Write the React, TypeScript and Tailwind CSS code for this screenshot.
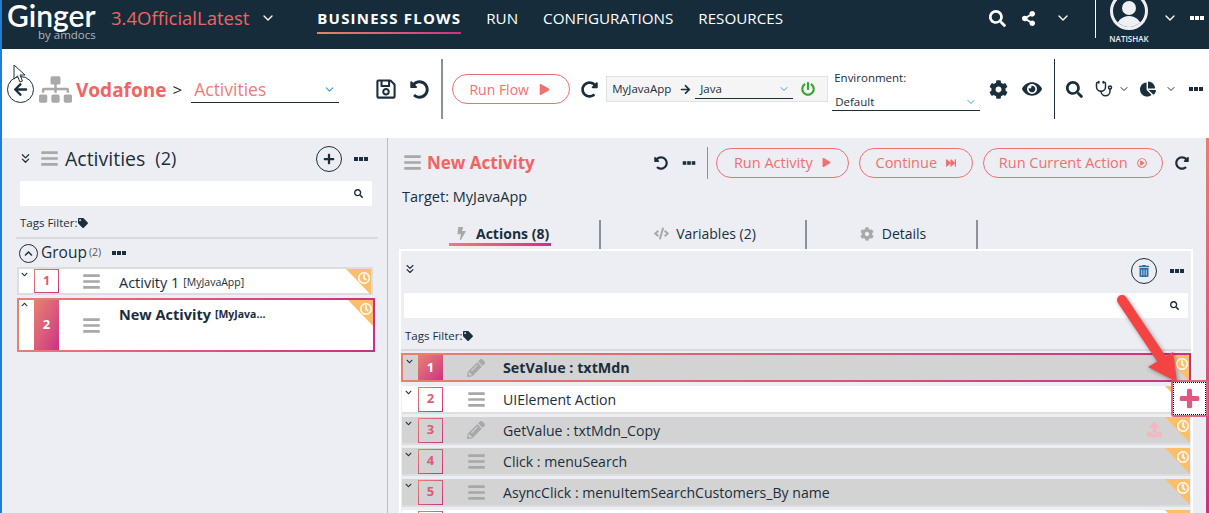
import {
  FaArrowLeft,
  FaArrowRight,
  FaBars,
  FaBolt,
  FaChartPie,
  FaChevronDown,
  FaChevronUp,
  FaCode,
  FaCog,
  FaEye,
  FaFastForward,
  FaPencilAlt,
  FaPlay,
  FaPlus,
  FaPowerOff,
  FaRedoAlt,
  FaRegClock,
  FaRegPlayCircle,
  FaRegSave,
  FaSearch,
  FaShareAlt,
  FaSitemap,
  FaTag,
  FaTrashAlt,
  FaUndoAlt,
  FaUpload,
} from "react-icons/fa";
import { LuChevronDown, LuChevronsDown, LuStethoscope } from "react-icons/lu";

const actions = [
  { n: 1, name: "SetValue : txtMdn", icon: "pen", selected: true },
  { n: 2, name: "UIElement Action", icon: "bars", white: true },
  { n: 3, name: "GetValue : txtMdn_Copy", icon: "pen", upload: true },
  { n: 4, name: "Click : menuSearch", icon: "bars" },
  { n: 5, name: "AsyncClick : menuItemSearchCustomers_By name", icon: "bars" },
];

function Dots({ className = "" }: { className?: string }) {
  return (
    <div className={`flex gap-[1px] ${className}`}>
      <span className="h-[4px] w-[4px] bg-current" />
      <span className="h-[4px] w-[4px] bg-current" />
      <span className="h-[4px] w-[4px] bg-current" />
    </div>
  );
}

function Corner() {
  return (
    <div className="absolute right-0 top-0 h-[26px] w-[25px] bg-[#fdbe69] [clip-path:polygon(0_0,100%_0,100%_100%)]">
      <FaRegClock className="absolute right-[1px] top-[3px] text-[12px] text-white" stroke="currentColor" strokeWidth={20} />
    </div>
  );
}

function NumBox({ n, on }: { n: number; on?: boolean }) {
  if (on) {
    return (
      <div className="flex w-[25px] self-stretch items-center justify-center bg-gradient-to-br from-[#e8806f] to-[#cc2f82] text-[13px] font-bold text-white">
        {n}
      </div>
    );
  }
  return (
    <div className="flex h-[25px] w-[25px] items-center justify-center border [border-image:linear-gradient(135deg,#e8806f,#cc2f82)_1] text-[13px] font-bold text-[#dd5a78]">
      {n}
    </div>
  );
}

function OutlineBtn({ label, icon, width }: { label: string; icon: React.ReactNode; width: string }) {
  return (
    <div className={`flex h-[30px] ${width} items-center justify-center gap-[9px] rounded-full border border-[#f26f6f] text-[14.5px] text-[#f26f6f]`}>
      {label}
      {icon}
    </div>
  );
}

function ActionRow({ a }: { a: (typeof actions)[number] }) {
  const bg = a.white ? "bg-white" : "bg-[#d3d3d3]";
  const outer = a.selected
    ? "h-[29px] mb-[4px] border-2 border-transparent [background:linear-gradient(#d3d3d3,#d3d3d3)_padding-box,linear-gradient(to_right,#e8806f,#cc2f82)_border-box]"
    : `h-[26px] mb-[5px] mx-[1px] shadow-[0_2px_0_#dcdde0] ${bg}`;
  return (
    <div className={`relative flex items-center ${outer}`}>
      <div className={`${a.selected ? "w-[15px]" : "w-[16px]"} self-start pl-[3px] pt-[3px]`}>
        <FaChevronDown className="text-[7px] text-[#1b2e3c]" />
      </div>
      <NumBox n={a.n} on={a.selected} />
      <div className="flex w-[60px] justify-center pl-[6px]">
        {a.icon === "pen" ? (
          <FaPencilAlt className="text-[18px] text-[#a8a8a8]" />
        ) : (
          <FaBars className="text-[19px] text-[#a8a8a8]" />
        )}
      </div>
      <span className={`pt-[1px] ${a.selected ? "text-[14.3px] font-bold" : "text-[14.1px]"}`}>{a.name}</span>
      {a.upload && <FaUpload className="absolute right-[28px] top-[5px] text-[15px] text-[#f9b4bd]" />}
      <Corner />
    </div>
  );
}

export default function App() {
  return (
    <div className="relative flex h-[513px] w-[1209px] flex-col overflow-hidden border-l-2 border-[#1e7fd4] bg-[#eceef3] font-['Open_Sans','Noto_Sans',sans-serif] text-[#1b2e3c]">
      {/* Top nav */}
      <header className="flex h-[49px] shrink-0 items-center bg-[#162c3b] pb-[13px] text-white">
        <div className="ml-[5px] flex w-[94px] flex-col self-start">
          <span className="font-['Lato',sans-serif] text-[30px] font-semibold leading-[28px] pt-[1px]">Ginger</span>
          <span className="ml-[31px] text-[11.5px] leading-[11px] text-[#aeb6bc]">by amdocs</span>
        </div>
        <span className="ml-[10px] text-[18.5px] text-[#f26464]">3.4OfficialLatest</span>
        <LuChevronDown className="ml-[11px] text-[16px]" />
        <nav className="ml-[41px] flex items-center gap-[25px] text-[15.2px]">
          <span className="relative text-[15px] font-bold tracking-[1.2px]">
            BUSINESS FLOWS
            <span className="absolute -bottom-[5px] left-0 h-[2px] w-full bg-gradient-to-r from-[#e8806f] to-[#cc2f82]" />
          </span>
          <span>RUN</span>
          <span>CONFIGURATIONS</span>
          <span>RESOURCES</span>
        </nav>
        <div className="ml-auto flex h-[36px] items-center self-start">
          <FaSearch className="text-[17px]" />
          <FaShareAlt className="ml-[15px] text-[15px]" />
          <LuChevronDown className="ml-[19px] text-[16px]" />
          <div className="ml-[24px] h-[38px] w-px self-start bg-white" />
          <div className="ml-[14px] flex w-[38px] flex-col items-center self-start">
            <div className="mt-[-8px] h-[38px] w-[38px] shrink-0 overflow-hidden rounded-full border-[3px] border-[#eef0f4]">
              <div className="mx-auto mt-[6px] h-[14px] w-[14px] rounded-full bg-[#eef0f4]" />
              <div className="mx-auto mt-[1px] h-[14px] w-[26px] rounded-t-full bg-[#eef0f4]" />
            </div>
            <span className="mt-[4px] text-[8px] font-semibold leading-[10px] text-[#eef0f4]">NATISHAK</span>
          </div>
          <LuChevronDown className="ml-[14px] text-[16px]" />
          <Dots className="ml-[12px] mr-[5px]" />
        </div>
      </header>

      {/* Toolbar */}
      <div className="flex h-[89px] shrink-0 items-center bg-white pb-[9px]">
        <div className="ml-[5px] flex h-[27px] w-[27px] items-center justify-center rounded-full border border-[#1b2e3c]">
          <FaArrowLeft className="text-[15px]" />
        </div>
        <FaSitemap className="ml-[5px] text-[33px] text-[#a9a9a9]" />
        <span className="ml-[4px] mt-[2px] text-[19px] font-bold text-[#f26464]">Vodafone</span>
        <span className="ml-[6px] mt-[2px] text-[17px]">&gt;</span>
        <div className="ml-[9px] mt-[2px] flex h-[26px] w-[148px] items-center justify-between border-b border-[#1b2e3c] px-[3px]">
          <span className="text-[17.5px] text-[#f27a7a]">Activities</span>
          <LuChevronDown className="text-[13px] text-[#3f9bea]" />
        </div>
        <FaRegSave className="ml-[36px] text-[22px]" />
        <FaUndoAlt className="ml-[13px] text-[19px]" />
        <div className="ml-[12px] h-[60px] w-[2px] bg-[#8a9299]" />
        <div className="ml-[9px] flex h-[30px] w-[118px] items-center justify-center gap-[10px] rounded-full border border-[#f26f6f] pr-[3px] text-[14px] text-[#f26f6f]">
          Run Flow <FaPlay className="text-[11px]" />
        </div>
        <FaRedoAlt className="ml-[11px] text-[17px]" />
        <div className="ml-[8px] flex h-[26px] w-[222px] items-center border border-[#e2e2e2] bg-[#f5f5f5] pl-[5px] text-[11.5px]">
          MyJavaApp
          <FaArrowRight className="ml-[9px] text-[11px]" />
          <div className="ml-[4px] flex h-[20px] w-[98px] items-center justify-between border-b border-[#1b2e3c] pl-[5px] pr-[3px]">
            Java
            <LuChevronDown className="text-[12px] text-[#3f9bea]" />
          </div>
          <FaPowerOff className="ml-[8px] text-[14px] text-[#3aa52f]" />
        </div>
        <div className="ml-[4px] mt-[3px] flex w-[148px] flex-col text-[11.5px] leading-[15px]">
          <span className="pl-[2px]">Environment:</span>
          <div className="mt-[8px] flex h-[18px] items-center justify-between border-b border-[#1b2e3c] px-[3px]">
            Default
            <LuChevronDown className="text-[12px] text-[#3f9bea]" />
          </div>
        </div>
        <FaCog className="ml-[9px] text-[19px]" />
        <FaEye className="ml-[14px] text-[20px]" />
        <div className="ml-[12px] h-[60px] w-px bg-[#1b2e3c]" />
        <FaSearch className="ml-[11px] text-[17px]" />
        <LuStethoscope className="ml-[12px] text-[18px]" />
        <LuChevronDown className="ml-[5px] text-[12px]" />
        <FaChartPie className="ml-[10px] text-[16px]" />
        <LuChevronDown className="ml-[9px] text-[12px]" />
        <Dots className="ml-[12px]" />
      </div>

      {/* Body */}
      <div className="flex min-h-0 flex-1">
        {/* Activities list */}
        <aside className="flex w-[386px] shrink-0 flex-col border-r border-[#b9bdc3] pl-[14px] pr-[9px]">
          <div className="flex h-[41px] shrink-0 items-center pl-[2px]">
            <LuChevronsDown className="text-[15px]" />
            <FaBars className="ml-[7px] text-[19px] text-[#a8a8a8]" />
            <span className="ml-[6px] text-[19.5px]">Activities</span>
            <span className="ml-[10px] text-[18px]">(2)</span>
            <div className="ml-auto flex h-[26px] w-[26px] items-center justify-center rounded-full border border-[#1b2e3c]">
              <FaPlus className="text-[12px]" />
            </div>
            <Dots className="ml-[12px] mr-[10px]" />
          </div>
          <div className="ml-[4px] mr-[6px] mt-[2px] flex h-[25px] shrink-0 items-center justify-end bg-white pr-[9px]">
            <FaSearch className="text-[9px]" />
          </div>
          <div className="ml-[4px] mt-[9px] flex items-center text-[11.5px] leading-[16px]">
            Tags Filter:
            <FaTag className="ml-[1px] text-[10px]" />
          </div>
          <div className="mt-[6px] h-[2px] shrink-0 bg-[#d8dadd]" />
          <div className="mt-[4px] flex h-[20px] items-center pl-[3px]">
            <div className="flex h-[19px] w-[19px] items-center justify-center rounded-full border border-[#1b2e3c]">
              <FaChevronUp className="text-[9px]" />
            </div>
            <span className="ml-[3px] text-[15.5px]">Group</span>
            <span className="ml-[2px] text-[10.5px] text-[#555]">(2)</span>
            <Dots className="ml-[11px]" />
          </div>
          {/* activity rows */}
          <div className="relative ml-[1px] mr-[5px] mt-[4px] flex h-[28px] shrink-0 items-stretch border-2 border-[#dcdde0] bg-white">
            <div className="w-[15px] pl-[2px] pt-[2px]">
              <FaChevronDown className="text-[7px]" />
            </div>
            <div className="flex h-[24px] w-[25px] items-center justify-center border [border-image:linear-gradient(135deg,#e8806f,#cc2f82)_1] text-[12.5px] font-bold text-[#dd5a78]">
              1
            </div>
            <div className="flex w-[60px] items-center justify-center pl-[4px]">
              <FaBars className="text-[19px] text-[#a8a8a8]" />
            </div>
            <div className="flex items-center pt-[3px]">
              <span className="text-[14.5px]">Activity 1</span>
              <span className="ml-[4px] mt-[1px] text-[10.5px]">[MyJavaApp]</span>
            </div>
            <Corner />
          </div>
          <div className="relative ml-[1px] mr-[3px] mt-[3px] flex h-[54px] shrink-0 items-stretch border-2 border-transparent [background:linear-gradient(#fff,#fff)_padding-box,linear-gradient(to_right,#e8806f,#cc2f82)_border-box]">
            <div className="w-[15px] pl-[2px] pt-[1px]">
              <FaChevronUp className="text-[7px]" />
            </div>
            <div className="flex w-[25px] items-center justify-center bg-gradient-to-br from-[#e8806f] to-[#cc2f82] text-[13px] font-bold text-white">
              2
            </div>
            <div className="flex w-[60px] items-center justify-center pl-[4px]">
              <FaBars className="text-[19px] text-[#a8a8a8]" />
            </div>
            <div className="flex items-start pt-[4px]">
              <span className="text-[14.5px] font-bold">New Activity</span>
              <span className="ml-[4px] mt-[3px] text-[10.5px] font-bold">[MyJava...</span>
            </div>
            <Corner />
          </div>
        </aside>

        {/* Activity details */}
        <main className="flex min-w-0 flex-1 flex-col overflow-hidden pl-[11px]">
          <div className="flex h-[49px] shrink-0 items-center pl-[4px]">
            <FaBars className="text-[19px] text-[#a8a8a8]" />
            <span className="ml-[5px] text-[17px] font-bold text-[#f26464]">New Activity</span>
            <FaUndoAlt className="ml-[119px] text-[14px]" />
            <Dots className="ml-[14px] scale-90" />
            <div className="ml-[11px] h-[32px] w-px bg-[#8a9299]" />
            <div className="ml-[8px] flex shrink-0 gap-[10px]">
              <OutlineBtn label="Run Activity" width="w-[133px]" icon={<FaPlay className="text-[9px]" />} />
              <OutlineBtn label="Continue" width="w-[114px]" icon={<FaFastForward className="text-[10px]" />} />
              <OutlineBtn label="Run Current Action" width="w-[180px]" icon={<FaRegPlayCircle className="text-[10px]" />} />
            </div>
            <FaRedoAlt className="ml-[12px] text-[14px]" />
          </div>
          <div className="shrink-0 pl-[3px] text-[14.5px] leading-[20px]">Target: MyJavaApp</div>
          <div className="mt-[13px] flex h-[29px] shrink-0 pl-[24px] text-[14px]">
            <div className="flex w-[178px] items-start border-r-2 border-[#8a9299] pt-[3px]">
              <span className="relative ml-[26px] flex items-center gap-[8px] pl-[6px] font-bold">
                <FaBolt className="text-[13px] text-[#a8a8a8]" />
                Actions (8)
                <span className="absolute -bottom-[2px] left-0 h-[3px] w-[102px] bg-gradient-to-r from-[#e8806f] to-[#cc2f82]" />
              </span>
            </div>
            <div className="flex w-[206px] items-start justify-center border-r-2 border-[#8a9299] pl-[4px] pt-[3px]">
              <span className="flex items-center gap-[7px]">
                <FaCode className="text-[15px] text-[#a8a8a8]" /> Variables (2)
              </span>
            </div>
            <div className="flex w-[171px] items-start justify-center border-r-2 border-[#8a9299] pl-[3px] pt-[3px]">
              <span className="flex items-center gap-[8px]">
                <FaCog className="text-[14px] text-[#a8a8a8]" /> Details
              </span>
            </div>
          </div>

          {/* Actions panel */}
          <section className="mr-[13px] min-h-0 flex-1 overflow-hidden border-l-2 border-r-2 border-t-2 border-white">
            <div className="flex h-[40px] items-center pl-[2px]">
              <LuChevronsDown className="mb-[4px] text-[14px]" />
              <div className="ml-auto flex h-[26px] w-[26px] items-center justify-center rounded-full border border-[#1b2e3c]">
                <FaTrashAlt className="text-[12px] text-[#2c6ea6]" />
              </div>
              <Dots className="ml-[13px] mr-[7px]" />
            </div>
            <div className="mx-[3px] mt-[2px] flex h-[25px] items-center justify-end bg-white pr-[9px]">
              <FaSearch className="text-[9px]" />
            </div>
            <div className="ml-[4px] mt-[10px] flex items-center text-[11.5px] leading-[16px]">
              Tags Filter:
              <FaTag className="ml-[1px] text-[10px]" />
            </div>
            <div className="mb-[2px] mt-[5px] h-[2px] bg-[#d8dadd]" />
            {actions.map((a) => (
              <ActionRow key={a.n} a={a} />
            ))}
            <div className="relative mx-[1px] flex h-[26px] items-center bg-white pl-[16px]">
              <div className="h-[25px] w-[25px] border [border-image:linear-gradient(135deg,#e8806f,#cc2f82)_1]" />
              <Corner />
            </div>
          </section>
        </main>

        <div className="w-[3px] shrink-0 bg-gradient-to-b from-[#e8806f] to-[#cc2f82]" />
      </div>

      {/* Add action button, over the rows */}
      <div className="absolute left-[1169px] top-[380px] flex h-[37px] w-[37px] items-center justify-center rounded-[3px] border-2 border-[#dc6a85] bg-white">
        <div className="flex h-full w-full items-center justify-center border border-dotted border-black">
          <FaPlus className="text-[21px] text-[#dc5a80]" stroke="currentColor" strokeWidth={30} />
        </div>
      </div>

      {/* Annotation arrow */}
      <svg className="absolute left-[1103px] top-[290px] drop-shadow-[1px_1px_2px_rgba(0,0,0,0.4)]" width="90" height="105" viewBox="0 0 90 105">
        <line x1="17" y1="10" x2="60" y2="74" stroke="#f44343" strokeWidth="10" strokeLinecap="round" />
        <polygon points="43,77 68,62 72,92" fill="#f44343" />
      </svg>

      {/* Mouse pointer */}
      <svg className="absolute left-[11px] top-[64px]" width="14" height="20" viewBox="0 0 14 20">
        <path d="M1 1 L1 15 L4.5 12 L7 18 L9.5 17 L7 11 L12 11 Z" fill="#fff" stroke="#1b2e3c" strokeWidth="1" />
      </svg>
    </div>
  );
}
